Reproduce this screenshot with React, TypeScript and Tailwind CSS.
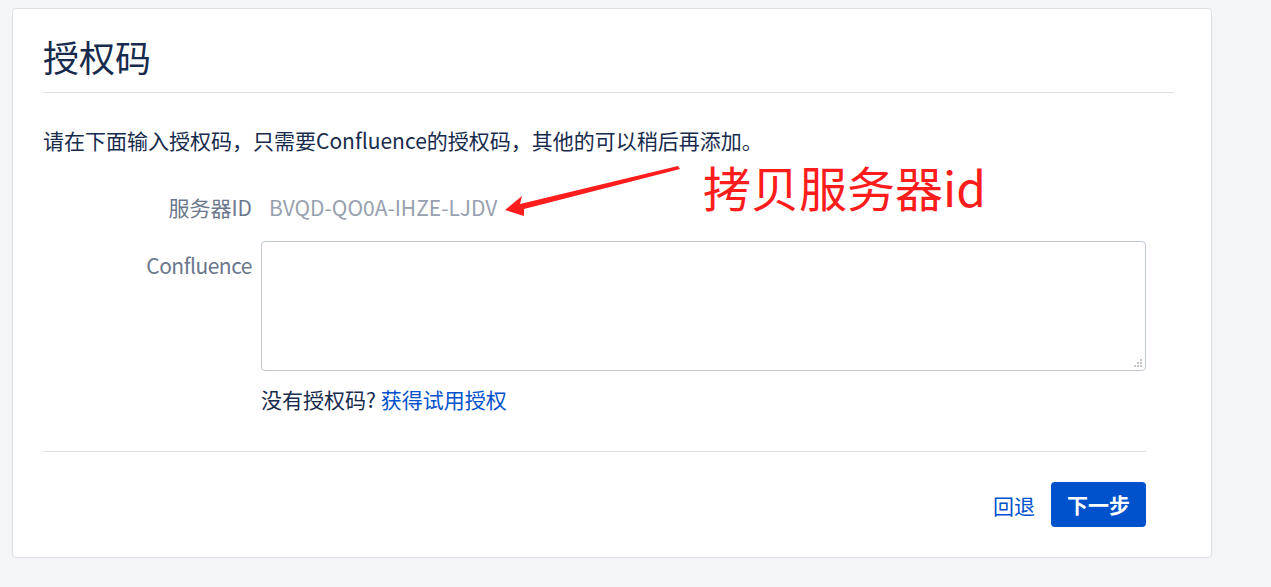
import React from "react";

const font = { fontFamily: '"Noto Sans CJK SC", "Noto Sans", sans-serif' };

const App = () => {
  return (
    <div className="min-h-[587px] w-[1271px] bg-[#f4f5f7] pt-[8px] pl-[12px]" style={font}>
      <div className="relative w-[1200px] rounded-[4px] border border-[#dfe1e6] bg-white pt-[25px] pr-[37px] pb-[30px] pl-[30px]">
        <div className="border-b border-[#dfe1e6] pb-[14px]">
          <h1 className="text-[36px] leading-[44px] text-[#172b4d]">授权码</h1>
        </div>

        <p className="mt-[32px] text-[21px] leading-[30px] text-[#172b4d]">
          请在下面输入授权码，只需要Confluence的授权码，其他的可以稍后再添加。
        </p>

        <div className="w-[1103px]">
          <div className="mt-[37px] flex text-[21px] leading-[30px]">
            <span className="w-[209px] text-right text-[#6b778c]">服务器ID</span>
            <span className="ml-[9px] pl-[8px] text-[#97a0af]">BVQD-QO0A-IHZE-LJDV</span>
          </div>

          <div className="mt-[19px] flex text-[21px] leading-[30px]">
            <span className="w-[209px] pt-[9px] text-right tracking-[-0.5px] text-[#6b778c]">Confluence</span>
            <div className="relative ml-[9px]">
              <textarea className="block h-[130px] w-[885px] resize-none rounded-[4px] border border-[#c1c7d0] bg-white px-[8px] py-[6px] text-[21px] text-[#172b4d] outline-none" />
              <svg className="absolute right-[3px] bottom-[3px]" width="9" height="9" viewBox="0 0 9 9">
                <rect x="6" y="0" width="2" height="2" fill="#c4c4c4" />
                <rect x="3" y="3" width="2" height="2" fill="#c4c4c4" />
                <rect x="6" y="3" width="2" height="2" fill="#c4c4c4" />
                <rect x="0" y="6" width="2" height="2" fill="#c4c4c4" />
                <rect x="3" y="6" width="2" height="2" fill="#c4c4c4" />
                <rect x="6" y="6" width="2" height="2" fill="#c4c4c4" />
              </svg>
            </div>
          </div>

          <div className="mt-[13px] ml-[218px] text-[21px] leading-[30px] text-[#172b4d]">
            没有授权码? <a className="text-[#0052cc]">获得试用授权</a>
          </div>

          <div className="mt-[37px] border-t border-[#dfe1e6]" />

          <div className="mt-[30px] flex items-center justify-end gap-[16px]">
            <a className="text-[21px] leading-[30px] text-[#0052cc]">回退</a>
            <button className="h-[45px] rounded-[4px] bg-[#0052cc] px-[16px] text-[21px] font-bold text-white">
              下一步
            </button>
          </div>
        </div>

        {/* annotation */}
        <svg className="absolute left-[478px] top-[147px]" width="200" height="75" viewBox="0 0 200 75">
          <polygon points="14,54 31,40 29,48 187,10 189,13 33,53 33,60" fill="#fe1c1c" />
        </svg>
        <div className="absolute left-[690px] top-[153px] text-[48px] leading-none text-[#fe1c1c]">拷贝服务器id</div>
      </div>
    </div>
  );
};

export default App;
